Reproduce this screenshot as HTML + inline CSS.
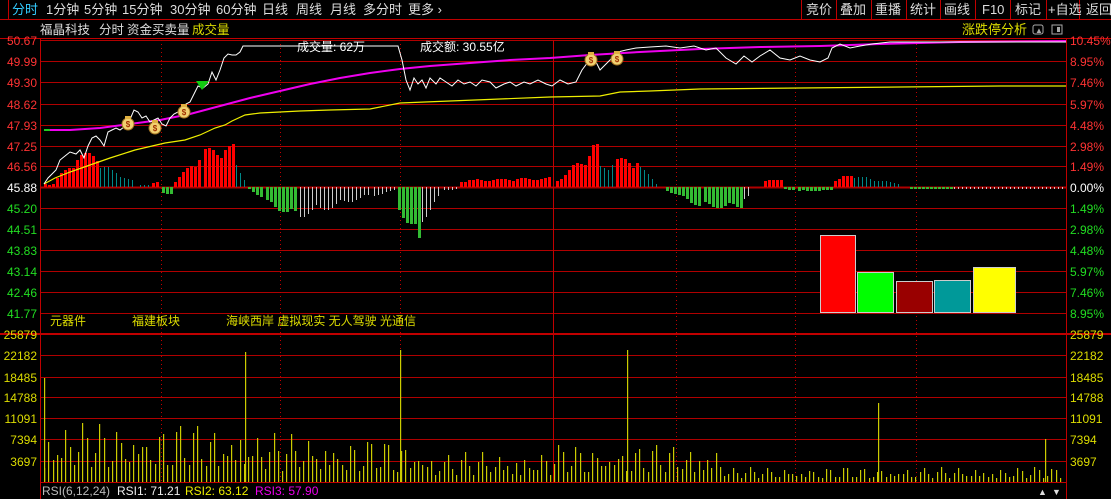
<!DOCTYPE html>
<html><head><meta charset="utf-8"><style>
html,body{margin:0;padding:0;background:#000;width:1111px;height:499px;overflow:hidden}
svg{display:block}
text{font-family:"Liberation Sans","Noto Sans CJK SC",sans-serif;font-size:12px}
</style></head><body>
<svg id="s" width="1111" height="499" xmlns="http://www.w3.org/2000/svg">
<rect width="1111" height="499" fill="#000"/>
<line x1="0" y1="19.5" x2="1111" y2="19.5" stroke="#c00000"/>
<line x1="8.5" y1="0" x2="8.5" y2="19" stroke="#c00000"/>
<g fill="#ddd">
<text x="12" y="14" fill="#3cf" style="font-size:13px">分时</text>
<text x="46" y="14" style="font-size:13px">1分钟</text>
<text x="84" y="14" style="font-size:13px">5分钟</text>
<text x="122" y="14" style="font-size:13px">15分钟</text>
<text x="170" y="14" style="font-size:13px">30分钟</text>
<text x="216" y="14" style="font-size:13px">60分钟</text>
<text x="262" y="14" style="font-size:13px">日线</text>
<text x="296" y="14" style="font-size:13px">周线</text>
<text x="330" y="14" style="font-size:13px">月线</text>
<text x="363" y="14" style="font-size:13px">多分时</text>
<text x="408" y="14" style="font-size:13px">更多 ›</text>
</g>
<g stroke="#c00000">
<line x1="801.5" y1="0" x2="801.5" y2="19"/><line x1="836.5" y1="0" x2="836.5" y2="19"/>
<line x1="871.5" y1="0" x2="871.5" y2="19"/><line x1="906.5" y1="0" x2="906.5" y2="19"/>
<line x1="940.5" y1="0" x2="940.5" y2="19"/><line x1="975.5" y1="0" x2="975.5" y2="19"/>
<line x1="1010.5" y1="0" x2="1010.5" y2="19"/><line x1="1046.5" y1="0" x2="1046.5" y2="19"/>
<line x1="1079.5" y1="0" x2="1079.5" y2="19"/>
</g>
<g fill="#ddd">
<text x="806" y="14" style="font-size:13px">竞价</text><text x="840" y="14" style="font-size:13px">叠加</text>
<text x="875" y="14" style="font-size:13px">重播</text><text x="910" y="14" style="font-size:13px">统计</text>
<text x="944" y="14" style="font-size:13px">画线</text><text x="982" y="14" style="font-size:13px">F10</text>
<text x="1015" y="14" style="font-size:13px">标记</text><text x="1048" y="14" style="font-size:13px">+自选</text>
<text x="1086" y="14" style="font-size:13px">返回</text>
</g>
<text x="40" y="34" fill="#ddd" style="font-size:12.5px">福晶科技</text>
<text x="99" y="34" fill="#ddd" style="font-size:12.5px">分时</text>
<text x="127" y="34" fill="#ddd" style="font-size:12.5px">资金买卖量</text>
<text x="192" y="34" fill="#dd0" style="font-size:12.5px">成交量</text>
<text x="962" y="34" fill="#dd0" style="font-size:13px">涨跌停分析</text>
<rect x="1033" y="25" width="10" height="9" rx="2" fill="none" stroke="#aaa"/>
<text x="1035" y="33" fill="#aaa" style="font-size:8px">▲</text>
<rect x="1052" y="25" width="10" height="9" fill="none" stroke="#aaa"/>
<rect x="1057" y="27" width="3" height="5" fill="#aaa"/>
<g id="grid"></g>
<g id="bars"></g>
<g id="vol"></g>
<rect x="820.5" y="235.5" width="35" height="77" fill="#f00" stroke="#ccc"/>
<rect x="857.5" y="272.5" width="36" height="40" fill="#0f0" stroke="#ccc"/>
<rect x="896.5" y="281.5" width="36" height="31" fill="#900" stroke="#ccc"/>
<rect x="934.5" y="280.5" width="36" height="32" fill="#099" stroke="#ccc"/>
<rect x="973.5" y="267.5" width="42" height="45" fill="#ff0" stroke="#ccc"/>
<polyline fill="none" stroke="#ee0" stroke-width="1.2" points="44,184 55,178 70,172 90,165 110,158 135,150 165,143 185,140 200,135 215,128 225,125 232,121 245,115 260,113 280,112 300,111 330,110 370,109 400,103 450,101 500,99 550,97 600,96 620,92 650,91 700,89 800,88 900,87 1000,86 1066,86"/>
<polyline fill="none" stroke="#e0e" stroke-width="2" points="44,130 70,130 100,128 130,124 160,120 190,114 220,106 250,98 280,91 310,84 340,78 370,73 400,69 430,66 470,63 510,60 550,58 590,55 640,52 700,49 760,47 820,46 880,44 960,42 1066,41"/>
<polyline fill="none" stroke="#fff" stroke-width="1" points="44,184 48,178 52,174 56,170 60,160 65,156 70,152 76,154 80,150 84,158 88,146 92,138 96,136 100,140 104,146 108,132 112,130 116,128 120,130 124,127 128,124 134,110 138,112 142,118 146,116 150,122 154,120 158,118 162,124 166,126 170,118 174,114 178,112 182,108 186,104 190,102 194,94 198,86 203,88 208,84 212,72 216,80 220,70 224,58 228,54 232,55 236,55 240,52 243,46 300,46 330,46 360,46 398,46 402,60 406,80 410,90 414,78 418,84 422,80 426,88 430,78 436,84 440,78 446,82 452,86 458,80 464,84 470,82 476,86 482,80 490,82 496,88 504,84 510,82 516,86 524,82 530,84 538,80 546,84 552,86 560,80 568,84 576,82 582,70 588,62 594,58 600,70 606,64 612,58 618,52 626,50 636,48 650,47 666,46 680,48 694,46 706,50 716,48 726,58 736,64 744,56 752,62 760,56 770,50 780,58 790,60 800,56 810,60 820,62 828,58 832,48 840,44 850,48 860,46 872,44 890,42 920,42 1066,42"/>
<polygon points="196,81 209,81 202,90" fill="#1c1"/>
<line x1="44" y1="130" x2="50" y2="130" stroke="#2c2" stroke-width="2"/>
<g id="bags"></g>
<text x="297" y="51" fill="#fff">成交量: 62万</text>
<text x="420" y="51" fill="#fff">成交额: 30.55亿</text>
<g fill="#dd0">
<text x="50" y="325">元器件</text>
<text x="132" y="325">福建板块</text>
<text x="226" y="325">海峡西岸 虚拟现实 无人驾驶 光通信</text>
</g>
<g id="labels"></g>
<text x="42" y="495" fill="#bbb">RSI(6,12,24)</text>
<text x="117" y="495" fill="#eee">RSI1: 71.21</text>
<text x="185" y="495" fill="#ee0">RSI2: 63.12</text>
<text x="255" y="495" fill="#e0e">RSI3: 57.90</text>
<text x="1038" y="495" fill="#ddd" style="font-size:9px">▲</text>
<text x="1052" y="495" fill="#ddd" style="font-size:9px">▼</text>
</svg>
<script>
var NS="http://www.w3.org/2000/svg";
function el(g,t,a){var e=document.createElementNS(NS,t);for(var k in a)e.setAttribute(k,a[k]);document.getElementById(g).appendChild(e);return e;}
var ys=[40,61,82,104,125,146,166,187,208,229,250,271,292,313];
ys.forEach(function(y){el("grid","line",{x1:40,x2:1066,y1:y+.5,y2:y+.5,stroke:"#b00000","stroke-width":y==187?2:1});});
[355,377,397,418,439,461].forEach(function(y){el("grid","line",{x1:40,x2:1066,y1:y+.5,y2:y+.5,stroke:"#b00000"});});
el("grid","line",{x1:0,x2:1111,y1:334,y2:334,stroke:"#c00000","stroke-width":2});
el("grid","line",{x1:40,x2:1066,y1:482.5,y2:482.5,stroke:"#c00000"});
el("grid","line",{x1:40.5,x2:40.5,y1:38,y2:499,stroke:"#c00000"});
el("grid","line",{x1:1066.5,x2:1066.5,y1:38,y2:499,stroke:"#c00000"});
el("grid","line",{x1:553.5,x2:553.5,y1:40,y2:482,stroke:"#c00000"});
el("grid","line",{x1:0,x2:1111,y1:38.5,y2:38.5,stroke:"#c00000"});
[161,280,400,676,795,916].forEach(function(x){el("grid","line",{x1:x+.5,x2:x+.5,y1:40,y2:482,stroke:"#c00000","stroke-dasharray":"1,3"});});
var L=["50.67","49.99","49.30","48.62","47.93","47.25","46.56","45.88","45.20","44.51","43.83","43.14","42.46","41.77"];
var R=["10.45%","8.95%","7.46%","5.97%","4.48%","2.98%","1.49%","0.00%","1.49%","2.98%","4.48%","5.97%","7.46%","8.95%"];
ys.forEach(function(y,i){var c=i<7?"#f33":(i==7?"#fff":"#2d2");
var t=el("labels","text",{x:37,y:y+5,fill:c,"text-anchor":"end"});t.textContent=L[i];
var r=el("labels","text",{x:1070,y:y+5,fill:c});r.textContent=R[i];});
var V=["25879","22182","18485","14788","11091","7394","3697"];
[334,355,377,397,418,439,461].forEach(function(y,i){var t=el("labels","text",{x:37,y:y+5,fill:"#dd0","text-anchor":"end"});t.textContent=V[i];
var r=el("labels","text",{x:1070,y:y+5,fill:"#dd0"});r.textContent=V[i];});
function seg(a,b,h1,h2,col,w){for(var x=a;x<=b;x+=4){var t=(b==a)?0:(x-a)/(b-a);var h=h1+(h2-h1)*t;h=Math.round(h*(0.8+0.4*Math.abs(Math.sin(x*1.7))));
if(h>0)el("bars","rect",{x:x,y:187-h,width:w,height:h,fill:col});else el("bars","rect",{x:x,y:187,width:w,height:-h,fill:col});}}
var R1="#f00",T="#088",G="#3b3",W="#ccc";
seg(44,52,3,3,R1,3);seg(56,72,8,22,R1,3);seg(76,96,28,30,R1,3);seg(100,134,20,5,T,1);seg(140,150,2,2,T,1);seg(152,158,4,4,R1,3);
seg(162,170,-5,-9,G,3);seg(174,200,5,30,R1,3);seg(204,232,32,36,R1,3);seg(236,246,20,6,T,1);
seg(248,262,-2,-10,G,3);seg(266,296,-15,-27,G,3);seg(300,370,-26,-8,W,1);seg(374,395,-8,-3,W,1);
seg(398,418,-20,-50,G,3);seg(422,440,-30,-8,W,1);seg(444,456,-3,-2,W,1);seg(460,548,6,8,R1,3);
seg(556,588,6,30,R1,3);seg(592,596,36,36,R1,3);seg(600,612,18,22,T,1);seg(616,636,24,24,R1,3);seg(640,656,18,4,T,1);
seg(666,700,-3,-18,G,3);seg(704,740,-18,-18,G,3);seg(744,750,-10,-8,W,1);
seg(764,780,5,8,R1,3);seg(784,794,-2,-3,G,3);seg(798,830,-4,-3,G,3);seg(834,850,5,13,R1,3);seg(854,900,10,3,T,1);
seg(910,950,-2,-2,G,3);seg(954,1064,-2,-2,W,1);
var sp=[[44,104],[245,130],[400,132],[627,132],[878,79],[1045,43]];
for(var x=44,i=0;x<1064;x+=4.25,i++){var base;
if(x<250)base=55;else if(x<330)base=45;else if(x<420)base=40;else if(x<553)base=28;else if(x<720)base=35;else base=14;
var h=Math.round(base*(0.25+0.85*Math.abs(Math.sin(i*2.3)*Math.cos(i*0.7))));
if(h<3)h=3;el("vol","rect",{x:Math.round(x),y:482-h,width:1.2,height:h,fill:"#cc0"});}
sp.forEach(function(p){el("vol","rect",{x:p[0],y:482-p[1],width:1.2,height:p[1],fill:"#cc0"});});
[[128,123],[155,127],[184,111],[591,59],[617,58]].forEach(function(b){
el("bags","circle",{cx:b[0],cy:b[1]+1,r:6,fill:"#f0d070",stroke:"#a07020"});
el("bags","rect",{x:b[0]-3,y:b[1]-7,width:6,height:3,fill:"#e0b040"});
var t=el("bags","text",{x:b[0],y:b[1]+4,fill:"#a03000","text-anchor":"middle",style:"font-size:8px;font-weight:bold"});t.textContent="$";});
</script>
</body></html>
